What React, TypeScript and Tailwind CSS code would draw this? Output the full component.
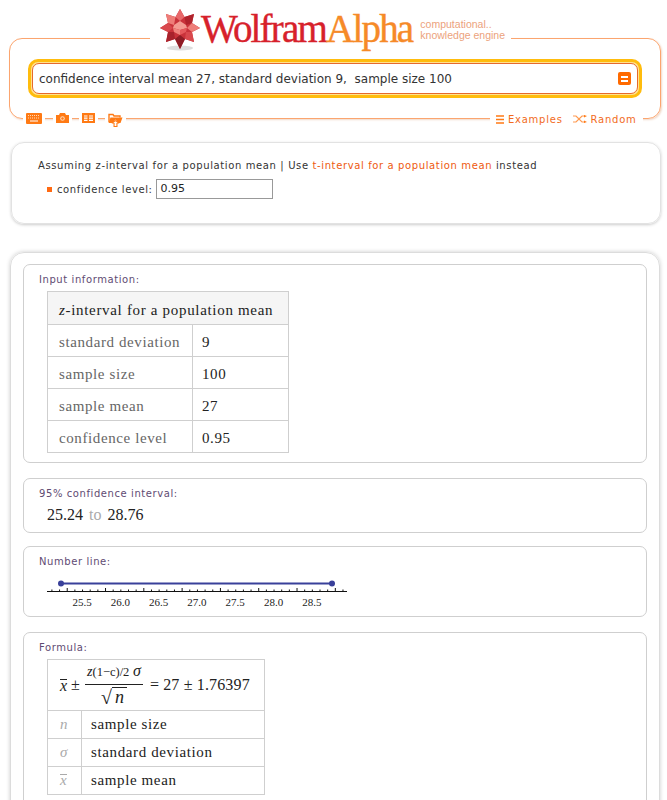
const ui = "font-['DejaVu_Sans',sans-serif]";
const serif = "font-['Liberation_Serif',serif]";

function Star() {
  return (
    <svg width="40" height="42" viewBox="0 0 40 42" className="block">
      <ellipse cx="20" cy="39" rx="13" ry="2.5" fill="#ddd" />
      <polygon
        points="20,0 24.5,8 34,5 32,14 40,19 32,23 34,33 25,30 20,40 15,30 6,33 8,23 0,19 8,14 6,5 15.5,8"
        fill="#c9323a"
      />
      <polygon points="20,0 24.5,8 20,12 15.5,8" fill="#e8686a" />
      <polygon points="24.5,8 34,5 32,14 26,16" fill="#b0232c" />
      <polygon points="32,14 40,19 32,23 27,19" fill="#ee7d78" />
      <polygon points="32,23 34,33 25,30 26,23" fill="#d9484d" />
      <polygon points="25,30 20,40 15,30 20,26" fill="#8e1b24" />
      <polygon points="15,30 6,33 8,23 14,23" fill="#a8222c" />
      <polygon points="8,23 0,19 8,14 13,19" fill="#d9484d" />
      <polygon points="8,14 6,5 15.5,8 14,16" fill="#ee7d78" />
      <polygon points="20,12 26,16 27,19 20,21 13,19 14,16" fill="#f49b92" />
      <polygon points="13,19 20,21 20,26 14,23" fill="#f0837d" />
      <polygon points="27,19 26,23 20,26 20,21" fill="#e5595c" />
    </svg>
  );
}

function Keyboard() {
  return (
    <svg width="16" height="11" viewBox="0 0 16 11" className="block">
      <rect width="16" height="11" rx="1" fill="#ff7a14" />
      <path d="M2 2.5h12M2 5h12" stroke="#ffd9b8" strokeWidth="1" strokeDasharray="1 1" />
      <path d="M4 8h8" stroke="#fff" strokeWidth="1" />
    </svg>
  );
}

function Camera() {
  return (
    <svg width="13" height="10" viewBox="0 0 13 10" className="block">
      <path d="M0 2h3l1-2h5l1 2h3v8H0z" fill="#ff7a14" />
      <circle cx="6.5" cy="5.5" r="2.3" fill="#ffd9b8" />
      <circle cx="6.5" cy="5.5" r="1.2" fill="#ff7a14" />
    </svg>
  );
}

function TableIcon() {
  return (
    <svg width="13" height="10" viewBox="0 0 13 10" className="block">
      <rect width="13" height="10" fill="#ff7a14" />
      <path d="M2 3h3.5M7 3h4M2 5.2h3.5M7 5.2h4M2 7.4h3.5M7 7.4h4" stroke="#fff" strokeWidth="1.2" />
    </svg>
  );
}

function FolderUp() {
  return (
    <svg width="15" height="14" viewBox="0 0 15 14" className="block">
      <path d="M1 9V1.5h4l1 1.5h6v1.5" fill="none" stroke="#ff7a14" strokeWidth="1.4" />
      <path d="M0.5 10l2-5.5h12l-2 5.5h-2.5L7.5 6.5 5 10z" fill="#ff7a14" />
      <path d="M7.5 7l4 3.5H9.5V14h-4v-3.5h-2z" fill="#ff7a14" />
      <path d="M7.5 8.2l2.2 1.8H8.4v3H6.6v-3H5.3z" fill="#fff" />
    </svg>
  );
}

function Header() {
  return (
    <div className="relative ml-[9px] h-[81px] w-[652px] rounded-[13px] border border-[#fba56f] shadow-[1px_1px_2px_#f0d8c8]">
      {/* logo sits on the top border */}
      <div className="absolute left-[140px] top-[-30px] flex h-[42px] items-center bg-white pl-[10px] pr-[6px]">
        <Star />
        <div className={`${serif} ml-[1px] mt-[-3px] text-[39px] leading-none tracking-[-1.8px] [-webkit-text-stroke:0.4px]`}>
          <span className="text-[#d7212b]">Wolfram</span>
          <span className="text-[#f68a28]">Alpha</span>
        </div>
        <div className="mt-[-1px] pl-[8px] font-['Liberation_Sans',sans-serif] text-[10.5px] leading-[10.5px] text-[#eca27c]">
          computational..
          <br />
          knowledge engine
        </div>
      </div>

      <div className="mx-[18px] mt-[20px] rounded-[10px] border-[3px] border-[#ffbc0d] bg-[#ffe28f] p-px">
        <div className={`${ui} flex h-[31px] items-center justify-between rounded-[7px] border border-[#e6692c] bg-white pl-[6px] pr-[6px] text-[12px] text-[#333]`}>
          <span className="whitespace-pre">confidence interval mean 27, standard deviation 9,  sample size 100</span>
          <div className="flex h-[13px] w-[13px] flex-col justify-center gap-[2px] rounded-[2px] bg-[#ff6a00] px-[3px]">
            <div className="h-[2px] bg-white" />
            <div className="h-[2px] bg-white" />
          </div>
        </div>
      </div>

      {/* controls sit on the bottom border */}
      <div className="absolute left-[13px] top-[74px] flex items-start gap-[3px] bg-transparent">
        <div className="bg-white px-[3px]"><Keyboard /></div>
        <div className="ml-[5px] bg-white px-[3px]"><Camera /></div>
        <div className="ml-[4px] bg-white px-[3px]"><TableIcon /></div>
        <div className="ml-[4px] bg-white px-[3px]"><FolderUp /></div>
      </div>
      <div className={`${ui} absolute left-[480px] top-[74px] flex h-[12px] items-center bg-white pl-[6px] pr-[6px] text-[10px] tracking-[0.75px] text-[#f26b1d]`}>
        <svg width="8" height="9" viewBox="0 0 8 9" className="mr-[4px]">
          <path d="M0 1h8M0 4.5h8M0 8h8" stroke="#ff7a14" strokeWidth="1.3" />
        </svg>
        <span>Examples</span>
        <svg width="14" height="8" viewBox="0 0 14 8" className="ml-[10px] mr-[4px]">
          <path d="M0 1h3l6 6h3M0 7h3l6-6h3" fill="none" stroke="#ff9a50" strokeWidth="1.2" />
          <path d="M11 0l3 1-3 1.5zM11 5.5L14 7l-3 1z" fill="#ff7a14" />
        </svg>
        <span>Random</span>
      </div>
    </div>
  );
}

function Pod({ title, className, children }: { title: string; className: string; children?: React.ReactNode }) {
  return (
    <div className={`rounded-[7px] border border-[#cfcfcf] bg-white ${className}`}>
      <div className={`${ui} pl-[15px] pt-[8px] text-[10px] leading-[14px] tracking-[0.58px] text-[#5f4b73]`}>{title}</div>
      {children}
    </div>
  );
}

const rows = [
  ["standard deviation", "9"],
  ["sample size", "100"],
  ["sample mean", "27"],
  ["confidence level", "0.95"],
];

function InputTable() {
  return (
    <table className={`${serif} ml-[23px] mt-[4px] w-[242px] border-collapse text-[15px] tracking-[0.6px]`}>
      <tbody>
        <tr className="h-[33px] bg-[#f5f5f5]">
          <td colSpan={2} className="border border-[#cfcfcf] pl-[11px] pt-[4px] tracking-[0.68px] text-[#222]">
            <i>z</i>-interval for a population mean
          </td>
        </tr>
        {rows.map(([label, value]) => (
          <tr key={label} className="h-[32px]">
            <td className="w-[145px] border border-[#cfcfcf] pl-[11px] pt-[4px] text-[#666]">{label}</td>
            <td className="border border-[#cfcfcf] pl-[9px] pt-[4px] text-[#222]">{value}</td>
          </tr>
        ))}
      </tbody>
    </table>
  );
}

function NumberLine() {
  const ticks = Array.from({ length: 39 }, (_, i) => 51.9 + i * 7.66);
  const labels = ["25.5", "26.0", "26.5", "27.0", "27.5", "28.0", "28.5"];
  return (
    <svg width="310" height="40" viewBox="0 0 310 40" className="ml-[23px] mt-[5px] block">
      <line x1="13.5" y1="9.5" x2="285" y2="9.5" stroke="#39409a" strokeWidth="2" />
      <circle cx="14" cy="9.5" r="3" fill="#39409a" />
      <circle cx="285" cy="9.5" r="3" fill="#39409a" />
      <line x1="0" y1="17.5" x2="300" y2="17.5" stroke="#111" strokeWidth="1" />
      {ticks.map((x, i) => (
        <line
          key={i}
          x1={x - 47}
          x2={x - 47}
          y1={(i + 3) % 5 === 0 ? 14 : 15.5}
          y2="17.5"
          stroke="#111"
          strokeWidth="1"
        />
      ))}
      {labels.map((label, i) => (
        <text key={label} x={35 + i * 38.3} y="32" textAnchor="middle" fontSize="11" fontFamily="Liberation Serif" fill="#222">
          {label}
        </text>
      ))}
    </svg>
  );
}

function Xbar() {
  return (
    <span className="inline-block border-t border-current pt-0 align-baseline leading-[11px]">
      <i>x</i>
    </span>
  );
}

function FormulaTable() {
  const legend: [React.ReactNode, string][] = [
    [<i>n</i>, "sample size"],
    [<i>σ</i>, "standard deviation"],
    [<Xbar />, "sample mean"],
  ];
  return (
    <table className={`${serif} ml-[23px] mt-[4px] w-[218px] border-collapse text-[15px] tracking-[0.62px] text-[#222]`}>
      <tbody>
        <tr className="h-[51px]">
          <td colSpan={2} className="border border-[#cfcfcf] pl-[12px]">
            <div className="flex items-center text-[16px] tracking-normal">
              <Xbar />
              <span className="ml-[4px]">±</span>
              <div className="ml-[5px] flex w-[58px] flex-col items-center">
                <div className="h-[23px] w-full border-b border-[#222] text-center text-[14px] leading-[18px] whitespace-nowrap">
                  <i>z</i><span className="text-[12.5px]">(1−c)/2</span> <i className="text-[16px]">σ</i>
                </div>
                <div className="flex h-[23px] items-center text-[18px] leading-none">
                  <span className="text-[20px]">√</span>
                  <i className="border-t border-[#222] px-[3px]">n</i>
                </div>
              </div>
              <span className="ml-[7px] whitespace-nowrap tracking-[0.15px]">= 27 ± 1.76397</span>
            </div>
          </td>
        </tr>
        {legend.map(([sym, label]) => (
          <tr key={label} className="h-[28px]">
            <td className="w-[34px] border border-[#cfcfcf] pl-[12px] text-[#aaa]">{sym}</td>
            <td className="border border-[#cfcfcf] pl-[9px]">{label}</td>
          </tr>
        ))}
      </tbody>
    </table>
  );
}

export default function App() {
  return (
    <div className={`${ui} relative h-[800px] w-[667px] overflow-hidden bg-white pt-[38px]`}>
      <Header />

      <div className="ml-[11px] mt-[23px] h-[82px] w-[650px] rounded-[13px] border border-[#e2e2e2] pl-[26px] pt-[16px] text-[10px] tracking-[0.62px] text-[#333] shadow-[0_1px_3px_#ccc]">
        <div className="leading-[14px]">
          Assuming z-interval for a population mean | Use <span className="text-[#ee5a10]">t-interval for a population mean</span> instead
        </div>
        <div className="ml-[9px] mt-[6px] flex items-center">
          <div className="h-[5px] w-[5px] bg-[#ff6a13]" />
          <span className="ml-[5px]">confidence level:</span>
          <div className="ml-[3px] flex h-[20px] w-[117px] items-center border border-[#999] pl-[4px] text-[11px] tracking-normal text-[#222]">0.95</div>
        </div>
      </div>

      <div className="ml-[10px] mt-[28px] h-[620px] w-[650px] rounded-[14px] border border-[#dcdcdc] px-[12px] pt-[11px] shadow-[0_0_4px_#ccc]">
        <Pod title="Input information:" className="h-[199px]">
          <InputTable />
        </Pod>
        <Pod title="95% confidence interval:" className="mt-[15px] h-[55px]">
          <div className={`${serif} ml-[23px] mt-[4px] flex items-center text-[16px] leading-[20px] text-[#222]`}>
            25.24
            <span className="mx-[6px] text-[#aaa]">to</span>
            28.76
          </div>
        </Pod>
        <Pod title="Number line:" className="mt-[13px] h-[71px]">
          <NumberLine />
        </Pod>
        <Pod title="Formula:" className="mt-[15px] h-[200px]">
          <FormulaTable />
        </Pod>
      </div>
    </div>
  );
}
